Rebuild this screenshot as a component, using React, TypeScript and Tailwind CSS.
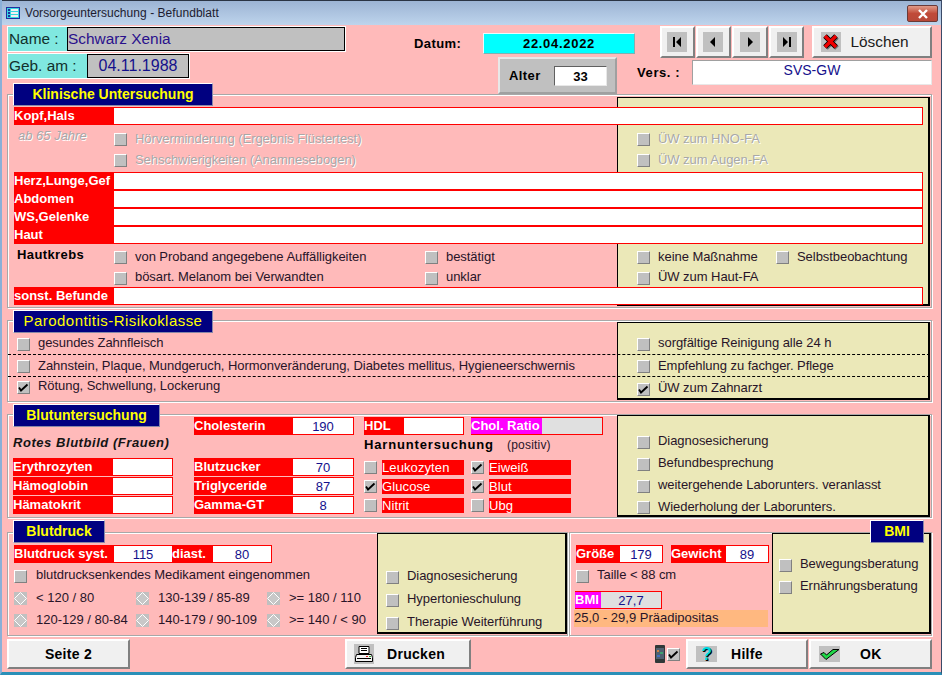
import type { ReactNode } from 'react';

const sectionBox = 'relative ml-[5px] w-[925px] border border-[#a8a8a8] shadow-[inset_1px_1px_0_#fff,1px_1px_0_#fff]';
const yellowBox = 'bg-[#ebe8b8] border border-black border-r-2 border-b-2';
const raised = 'bg-[#f0f0f0] border-2 border-t-white border-l-white border-r-[#808080] border-b-[#808080]';

function Tab({ children, className }: { children: ReactNode; className: string }) {
  return (
    <div className={`absolute z-20 h-[23px] flex items-center justify-center bg-[#000080] text-[#ffff00] text-[14px] border border-t-white border-l-white border-r-[#8888a8] border-b-[#8888a8] ${className}`}>
      {children}
    </div>
  );
}

function Check({ checked, className = '' }: { checked?: boolean; className?: string }) {
  return (
    <span className={`w-[13px] h-[13px] shrink-0 bg-[#c0c0c0] border border-t-white border-l-white border-r-[#808080] border-b-[#808080] flex items-center justify-center ${className}`}>
      {checked && (
        <svg width="11" height="9" viewBox="0 0 11 9">
          <path d="M1 4.5 L3 7.5 L9.5 1.5" fill="none" stroke="#000" strokeWidth="1.8" />
        </svg>
      )}
    </span>
  );
}

function Item({ label, checked, disabled, className = '' }: { label: string; checked?: boolean; disabled?: boolean; className?: string }) {
  return (
    <div className={`flex items-center h-[16px] whitespace-nowrap ${className}`}>
      <Check checked={checked} className="mt-[2px]" />
      <span className={`ml-[8px] text-[13px] tracking-[-0.05px] ${disabled ? 'text-[#a8a8a8] [text-shadow:1px_1px_0_#fff]' : 'text-[#281428]'}`}>
        {label}
      </span>
    </div>
  );
}

function Radio({ label }: { label: string }) {
  return (
    <div className="flex items-center h-[22px] whitespace-nowrap">
      <span className="w-[13px] h-[13px] bg-[#c0c0c0] flex items-center justify-center shrink-0">
        <svg width="13" height="13" viewBox="0 0 13 13">
          <path d="M6.5 0.5 L12.5 6.5 L6.5 12.5 L0.5 6.5 Z" fill="#c8c8c8" stroke="#fff" />
        </svg>
      </span>
      <span className="ml-[9px] text-[13px] text-[#281428]">{label}</span>
    </div>
  );
}

function Long({ label }: { label: string }) {
  return (
    <div className="flex w-[909px] h-[18px] border border-l-0 border-[#ff0000] bg-white">
      <div className="w-[100px] bg-[#ff0000] text-white font-bold text-[13px] leading-[15px] overflow-hidden whitespace-nowrap">
        {label}
      </div>
    </div>
  );
}

function Val({ label, value, box, head, grey, magenta }: { label: string; value?: string; box: string; head: string; grey?: boolean; magenta?: boolean }) {
  return (
    <div className={`flex h-[18px] border border-l-0 border-[#ff0000] ${grey ? 'bg-[#e0e0e0]' : 'bg-white'} ${box}`}>
      <div className={`${head} ${magenta ? 'bg-[#ff00ff]' : 'bg-[#ff0000]'} text-white font-bold text-[13px] leading-[15px] overflow-hidden whitespace-nowrap shrink-0`}>
        {label}
      </div>
      <div className="flex-1 text-center text-[13px] leading-[17px] text-[#14108c]">{value}</div>
    </div>
  );
}

function Urine({ label, checked }: { label: string; checked?: boolean }) {
  return (
    <div className="flex items-center h-[19px]">
      <Check checked={checked} />
      <div className="ml-[5px] w-[82px] h-[15px] bg-[#ff0000] text-white text-[13px] leading-[16px] tracking-[0.1px]">{label}</div>
    </div>
  );
}

function NavBtn({ d, className }: { d: string; className: string }) {
  return (
    <button className={`${raised} h-[32px] flex items-center justify-center ${className}`}>
      <span className="w-[20px] h-[20px] bg-[#c0c0c0] flex items-center justify-center">
        <svg width="12" height="12" viewBox="0 0 12 12">
          <path d={d} fill="#000" />
        </svg>
      </span>
    </button>
  );
}

export default function App() {
  return (
    <div className="w-[942px] h-[675px] overflow-hidden relative bg-[#ffbaba] border-l-2 border-r border-b-[3px] border-l-[#8ab0d8] border-r-[#3a4a68] border-b-[#2a90b8] [font-family:'Liberation_Sans',Arial,sans-serif] text-black">
      {/* title bar */}
      <div className="h-[25px] flex items-center bg-gradient-to-b from-[#9cb4d4] to-[#bed4ec] border-t border-t-[#2a3444] -ml-[2px] pl-[6px] relative">
        <svg width="14" height="12" viewBox="0 0 14 12" className="shrink-0">
          <rect x="0.5" y="0.5" width="13" height="11" fill="#38d8e0" stroke="#2030a0" />
          <rect x="2" y="2" width="2" height="2" fill="#2030a0" />
          <rect x="5" y="2" width="7" height="2" fill="#f0f0f0" />
          <rect x="2" y="5" width="2" height="2" fill="#2030a0" />
          <rect x="5" y="5" width="7" height="2" fill="#f0f0f0" />
          <rect x="2" y="8" width="2" height="2" fill="#2030a0" />
          <rect x="5" y="8" width="7" height="2" fill="#f0f0f0" />
        </svg>
        <span className="ml-[5px] text-[12px] tracking-[0.05px] text-[#1c1c30]">Vorsorgeuntersuchung - Befundblatt</span>
        <div className="absolute right-[3px] top-[4px] w-[31px] h-[17px] rounded-[2px] border border-[#6a3a38] bg-gradient-to-b from-[#e09a88] via-[#c04a38] to-[#b84838] flex items-center justify-center">
          <svg width="12" height="10" viewBox="0 0 12 10">
            <path d="M2 1 L10 9 M10 1 L2 9" stroke="#fff" strokeWidth="2.4" />
          </svg>
        </div>
      </div>

      {/* header */}
      <div className="h-[69px] flex pl-[5px]">
        <div className="w-[339px] pt-[1px]">
          <div className="flex w-[339px] h-[26px] border border-white bg-[#80e8e0] items-center">
            <div className="w-[59px] text-[15.4px] pl-[1px] text-[#12302c]">Name :</div>
            <div className="flex-1 h-[24px] bg-[#c0c0c0] border border-black text-[15.4px] leading-[21px] text-[#2a108c]">Schwarz Xenia</div>
          </div>
          <div className="flex w-[183px] h-[26px] mt-px border border-white bg-[#80e8e0] items-center">
            <div className="w-[79px] text-[15.4px] pl-[1px] text-[#12302c]">Geb. am :</div>
            <div className="flex-1 h-[24px] bg-[#c0c0c0] border border-black text-[16px] leading-[21px] text-center text-[#14108c]">04.11.1988</div>
          </div>
        </div>

        <div className="ml-[68px] w-[221px]">
          <div className="flex items-center mt-[8px] h-[21px]">
            <div className="w-[69px] font-bold text-[13px] tracking-[0.4px]">Datum:</div>
            <div className="w-[152px] h-[21px] bg-[#00ffff] border border-t-[#e8fcfc] border-l-[#e8fcfc] border-r-[#80b0b0] border-b-[#80b0b0] text-center font-bold text-[13px] tracking-[0.7px] leading-[19px]">22.04.2022</div>
          </div>
          <div className="ml-[84px] w-[119px] h-[37px] mt-[3px] bg-[#c0c0c0] border-2 border-t-[#e8e8e8] border-l-[#e8e8e8] border-r-[#a0a0a0] border-b-[#a0a0a0] flex items-center pl-[9px]">
            <div className="font-bold text-[13px] tracking-[0.4px] w-[45px]">Alter</div>
            <div className="w-[53px] h-[20px] bg-white border border-t-[#606060] border-l-[#606060] border-r-[#e8e8e8] border-b-[#e8e8e8] text-center font-bold text-[13px] leading-[19px]">33</div>
          </div>
        </div>

        <div className="ml-[2px] w-[295px] pt-px">
          <div className="flex h-[32px] ml-[23px]">
            <NavBtn className="w-[35px]" d="M2 1h2v10H2z M10 1v10L5 6z" />
            <NavBtn className="w-[36px] ml-px" d="M8 1v10L3 6z" />
            <NavBtn className="w-[36px] ml-px" d="M4 1v10L9 6z" />
            <NavBtn className="w-[36px] ml-px" d="M2 1v10L7 6z M8 1h2v10H8z" />
            <button className={`${raised} w-[121px] h-[32px] ml-[8px] flex items-center pl-[7px]`}>
              <span className="w-[20px] h-[20px] bg-[#c0c0c0] flex items-center justify-center shrink-0">
                <svg width="18" height="18" viewBox="0 0 18 18">
                  <path d="M4 4 L15 15 M15 4 L4 15" stroke="#707070" strokeWidth="5" />
                  <path d="M3 3 L14 14 M14 3 L3 14" stroke="#000" strokeWidth="5" />
                  <path d="M3 3 L14 14 M14 3 L3 14" stroke="#f00000" strokeWidth="3.4" />
                </svg>
              </span>
              <span className="ml-[9px] text-[15.4px] text-[#1a1a1a]">Löschen</span>
            </button>
          </div>
          <div className="flex items-center mt-[2px] h-[25px]">
            <div className="w-[55px] font-bold text-[13px] tracking-[0.6px]">Vers. :</div>
            <div className="w-[240px] h-[25px] bg-white border border-t-[#a0a0a0] border-l-[#a0a0a0] border-r-[#e8e8e8] border-b-[#e8e8e8] text-center text-[14px] leading-[18px] text-[#14108c]">SVS-GW</div>
          </div>
        </div>
      </div>

      {/* Klinische Untersuchung */}
      <section className={`${sectionBox} h-[214px]`}>
        <Tab className="left-[5px] -top-[12px] w-[200px] font-bold">Klinische Untersuchung</Tab>
        <div className={`${yellowBox} absolute left-[609px] top-[2px] w-[313px] h-[209px]`} />
        <div className="relative pl-[6px] pt-[12px]">
          <Long label="Kopf,Hals" />
          <div className="h-[47px] pt-[3px] grid grid-cols-[100px_523px_auto] grid-rows-[21px_21px] items-center">
            <div className="pl-[4px] text-[13px] italic text-[#a8a8a8] [text-shadow:1px_1px_0_#fff] self-start mt-[-2px]">ab 65 Jahre</div>
            <Item disabled label="Hörverminderung (Ergebnis Flüstertest)" />
            <Item disabled label="ÜW zum HNO-FA" />
            <div />
            <Item disabled label="Sehschwierigkeiten (Anamnesebogen)" />
            <Item disabled label="ÜW zum Augen-FA" />
          </div>
          <Long label="Herz,Lunge,Gef" />
          <Long label="Abdomen" />
          <Long label="WS,Gelenke" />
          <Long label="Haut" />
          <div className="h-[43px] pt-[2px] grid grid-cols-[100px_311px_212px_auto] grid-rows-[21px_20px] items-center">
            <div className="pl-[3px] font-bold text-[13px] tracking-[0.4px] self-start mt-[-1px]">Hautkrebs</div>
            <Item label="von Proband angegebene Auffälligkeiten" />
            <Item label="bestätigt" />
            <div className="flex">
              <Item label="keine Maßnahme" className="w-[139px]" />
              <Item label="Selbstbeobachtung" />
            </div>
            <div />
            <Item label="bösart. Melanom bei Verwandten" />
            <Item label="unklar" />
            <Item label="ÜW zum Haut-FA" />
          </div>
          <Long label="sonst. Befunde" />
        </div>
      </section>

      {/* Parodontitis */}
      <section className={`${sectionBox} h-[82px] mt-[12px]`}>
        <Tab className="left-[5px] -top-[11px] w-[200px] text-[15px] tracking-[0.45px]">Parodontitis-Risikoklasse</Tab>
        <div className={`${yellowBox} absolute left-[609px] top-px w-[313px] h-[78px]`} />
        <div className="relative">
          <div className="h-[34px] pb-[3px] flex items-end border-b border-dashed border-black pl-[9px] w-[922px]">
            <Item label="gesundes Zahnfleisch" className="w-[620px]" />
            <Item label="sorgfältige Reinigung alle 24 h" />
          </div>
          <div className="h-[22px] flex items-center border-b border-dashed border-black pl-[9px] w-[922px]">
            <Item label="Zahnstein, Plaque, Mundgeruch, Hormonveränderung, Diabetes mellitus, Hygieneerschwernis" className="w-[620px]" />
            <Item label="Empfehlung zu fachger. Pflege" />
          </div>
          <div className="h-[23px] pt-px flex items-start pl-[9px] w-[922px]">
            <Item checked label="Rötung, Schwellung, Lockerung" className="w-[620px]" />
            <Item checked label="ÜW zum Zahnarzt" className="mt-[2px]" />
          </div>
        </div>
      </section>

      {/* Blutuntersuchung */}
      <section className={`${sectionBox} h-[104px] mt-[12px]`}>
        <Tab className="left-[5px] -top-[11px] w-[147px] font-bold">Blutuntersuchung</Tab>
        <div className={`${yellowBox} absolute left-[609px] top-0 w-[313px] h-[102px]`} />
        <div className="relative flex pl-[5px]">
          <div className="w-[181px]">
            <div className="mt-[20px] h-[16px] font-bold italic text-[13px] tracking-[0.55px] leading-[16px] text-[#141414]">Rotes Blutbild (Frauen)</div>
            <div className="mt-[7px] flex flex-col gap-px">
              <Val label="Erythrozyten" box="w-[160px]" head="w-[100px]" />
              <Val label="Hämoglobin" box="w-[160px]" head="w-[100px]" />
              <Val label="Hämatokrit" box="w-[160px]" head="w-[100px]" />
            </div>
          </div>
          <div className="w-[170px] pt-[2px]">
            <Val label="Cholesterin" value="190" box="w-[160px]" head="w-[99px]" />
            <div className="mt-[23px] flex flex-col gap-px">
              <Val label="Blutzucker" value="70" box="w-[160px]" head="w-[99px]" />
              <Val label="Triglyceride" value="87" box="w-[160px]" head="w-[99px]" />
              <Val label="Gamma-GT" value="8" box="w-[160px]" head="w-[99px]" />
            </div>
          </div>
          <div className="w-[273px] pt-[2px]">
            <div className="flex">
              <Val label="HDL" box="w-[100px]" head="w-[40px]" />
              <Val grey magenta label="Chol. Ratio" box="w-[132px] ml-[7px]" head="w-[71px]" />
            </div>
            <div className="flex items-center h-[16px] mt-[2px]">
              <span className="w-[143px] font-bold text-[13px] tracking-[0.85px]">Harnuntersuchung</span>
              <span className="text-[12px] tracking-[0.2px] text-[#281428]">(positiv)</span>
            </div>
            <div className="mt-[5px] grid grid-cols-[107px_auto] w-[200px]">
              <Urine label="Leukozyten" />
              <Urine checked label="Eiweiß" />
              <Urine checked label="Glucose" />
              <Urine checked label="Blut" />
              <Urine label="Nitrit" />
              <Urine label="Ubg" />
            </div>
          </div>
          <div className="pt-[15px]">
            <div className="h-[22px] flex items-center"><Item label="Diagnosesicherung" /></div>
            <div className="h-[22px] flex items-center"><Item label="Befundbesprechung" /></div>
            <div className="h-[22px] flex items-center"><Item label="weitergehende Laborunters. veranlasst" /></div>
            <div className="h-[21px] flex items-center"><Item label="Wiederholung der Laborunters." /></div>
          </div>
        </div>
      </section>

      {/* Blutdruck + BMI */}
      <div className="flex mt-[14px] ml-[5px] h-[104px] w-[925px]">
        <section className="relative w-[562px] border border-[#a8a8a8] shadow-[inset_1px_1px_0_#fff,1px_1px_0_#fff] flex">
          <Tab className="left-[5px] -top-[13px] w-[92px] font-bold">Blutdruck</Tab>
          <div className="w-[369px] pl-[6px] pt-[12px]">
            <div className="flex w-[258px] h-[18px] border border-l-0 border-[#ff0000] bg-white">
              <div className="w-[100px] bg-[#ff0000] text-white font-bold text-[13px] leading-[15px]">Blutdruck syst.</div>
              <div className="w-[58px] text-center text-[13px] leading-[17px] text-[#14108c]">115</div>
              <div className="w-[41px] bg-[#ff0000] text-white font-bold text-[13px] leading-[15px]">diast.</div>
              <div className="flex-1 text-center text-[13px] leading-[17px] text-[#14108c]">80</div>
            </div>
            <Item label="blutdrucksenkendes Medikament eingenommen" className="mt-[4px] [&>span:last-child]:ml-[9px]" />
            <div className="mt-[4px] grid grid-cols-[122px_131px_auto]">
              <Radio label="< 120 / 80" />
              <Radio label="130-139 / 85-89" />
              <Radio label=">= 180 / 110" />
              <Radio label="120-129 / 80-84" />
              <Radio label="140-179 / 90-109" />
              <Radio label=">= 140 / < 90" />
            </div>
          </div>
          <div className={`${yellowBox} w-[190px] h-[101px] mt-0 pl-[8px] pt-[34px] flex flex-col gap-[7px]`}>
            <Item label="Diagnosesicherung" />
            <Item label="Hypertonieschulung" />
            <Item label="Therapie Weiterführung" />
          </div>
        </section>
        <section className="relative ml-px flex-1 border border-[#a8a8a8] shadow-[inset_1px_1px_0_#fff,1px_1px_0_#fff] flex">
          <Tab className="left-[300px] -top-[13px] w-[54px] font-bold">BMI</Tab>
          <div className="w-[202px] pl-[6px] pt-[12px]">
            <div className="flex">
              <Val label="Größe" value="179" box="w-[87px]" head="w-[44px]" />
              <Val label="Gewicht" value="89" box="w-[98px] ml-[8px]" head="w-[55px]" />
            </div>
            <Item label="Taille < 88 cm" className="mt-[4px]" />
            <Val grey magenta label="BMI" value="27,7" box="w-[87px] mt-[8px] -ml-px" head="w-[26px]" />
            <div className="w-[194px] h-[17px] -ml-[2px] mt-px bg-[#ffb880] text-[13px] leading-[16px] text-[#281428]">25,0 - 29,9 Präadipositas</div>
          </div>
          <div className={`${yellowBox} w-[159px] h-[101px] pl-[6px] pt-[22px] flex flex-col gap-[6px]`}>
            <Item label="Bewegungsberatung" />
            <Item label="Ernährungsberatung" />
          </div>
        </section>
      </div>

      {/* bottom buttons */}
      <div className="flex items-center h-[30px] mt-[3px] ml-[5px]">
        <button className={`${raised} w-[123px] h-[30px] font-bold text-[14px] tracking-[0.3px]`}>Seite 2</button>
        <button className={`${raised} w-[126px] h-[30px] ml-[215px] flex items-center pl-[7px]`}>
          <span className="w-[20px] h-[20px] bg-[#c0c0c0] flex items-center justify-center shrink-0">
            <svg width="20" height="20" viewBox="0 0 20 20">
              <path d="M5 2.5h10v7H5z" fill="#fff" stroke="#000" />
              <path d="M7 4.5h6M7 6.5h6" stroke="#000" />
              <path d="M2.5 10.5h15l1 3v4h-17v-4z" fill="#f4f4f4" stroke="#000" />
              <path d="M3 14.5h14" stroke="#000" />
              <rect x="12" y="12" width="2" height="1" fill="#e02020" />
              <rect x="15" y="12" width="2" height="1" fill="#20b020" />
            </svg>
          </span>
          <span className="ml-[13px] font-bold text-[14px] tracking-[0.3px]">Drucken</span>
        </button>
        <svg width="10" height="18" viewBox="0 0 10 18" className="ml-[184px] shrink-0">
          <rect width="10" height="18" rx="1" fill="#303838" />
          <rect x="1" y="3" width="8" height="11" fill="#506070" />
          <rect x="2" y="5" width="2" height="2" fill="#d08040" />
          <rect x="5" y="7" width="3" height="2" fill="#40a070" />
          <rect x="2" y="10" width="3" height="2" fill="#4070c0" />
        </svg>
        <Check checked className="ml-[2px]" />
        <button className={`${raised} w-[122px] h-[30px] ml-[6px] flex items-center pl-[8px]`}>
          <span className="w-[21px] h-[16px] bg-[#c0c0c0] flex items-center justify-center shrink-0 font-bold text-[18px] leading-none text-[#00d8e0] [text-shadow:1px_1px_0_#000]">?</span>
          <span className="ml-[14px] font-bold text-[14px] tracking-[0.3px]">Hilfe</span>
        </button>
        <button className={`${raised} w-[123px] h-[30px] ml-px flex items-center pl-[8px]`}>
          <span className="w-[21px] h-[16px] bg-[#c0c0c0] flex items-center justify-center shrink-0">
            <svg width="21" height="14" viewBox="0 0 21 14">
              <path d="M1.5 7 L7 12.5 L20 2.5 L14 2.5 L7.5 8 L5 5.5 Z" fill="#20d848" stroke="#000" strokeWidth="1" />
            </svg>
          </span>
          <span className="ml-[20px] font-bold text-[14px] tracking-[0.3px]">OK</span>
        </button>
      </div>
    </div>
  );
}
